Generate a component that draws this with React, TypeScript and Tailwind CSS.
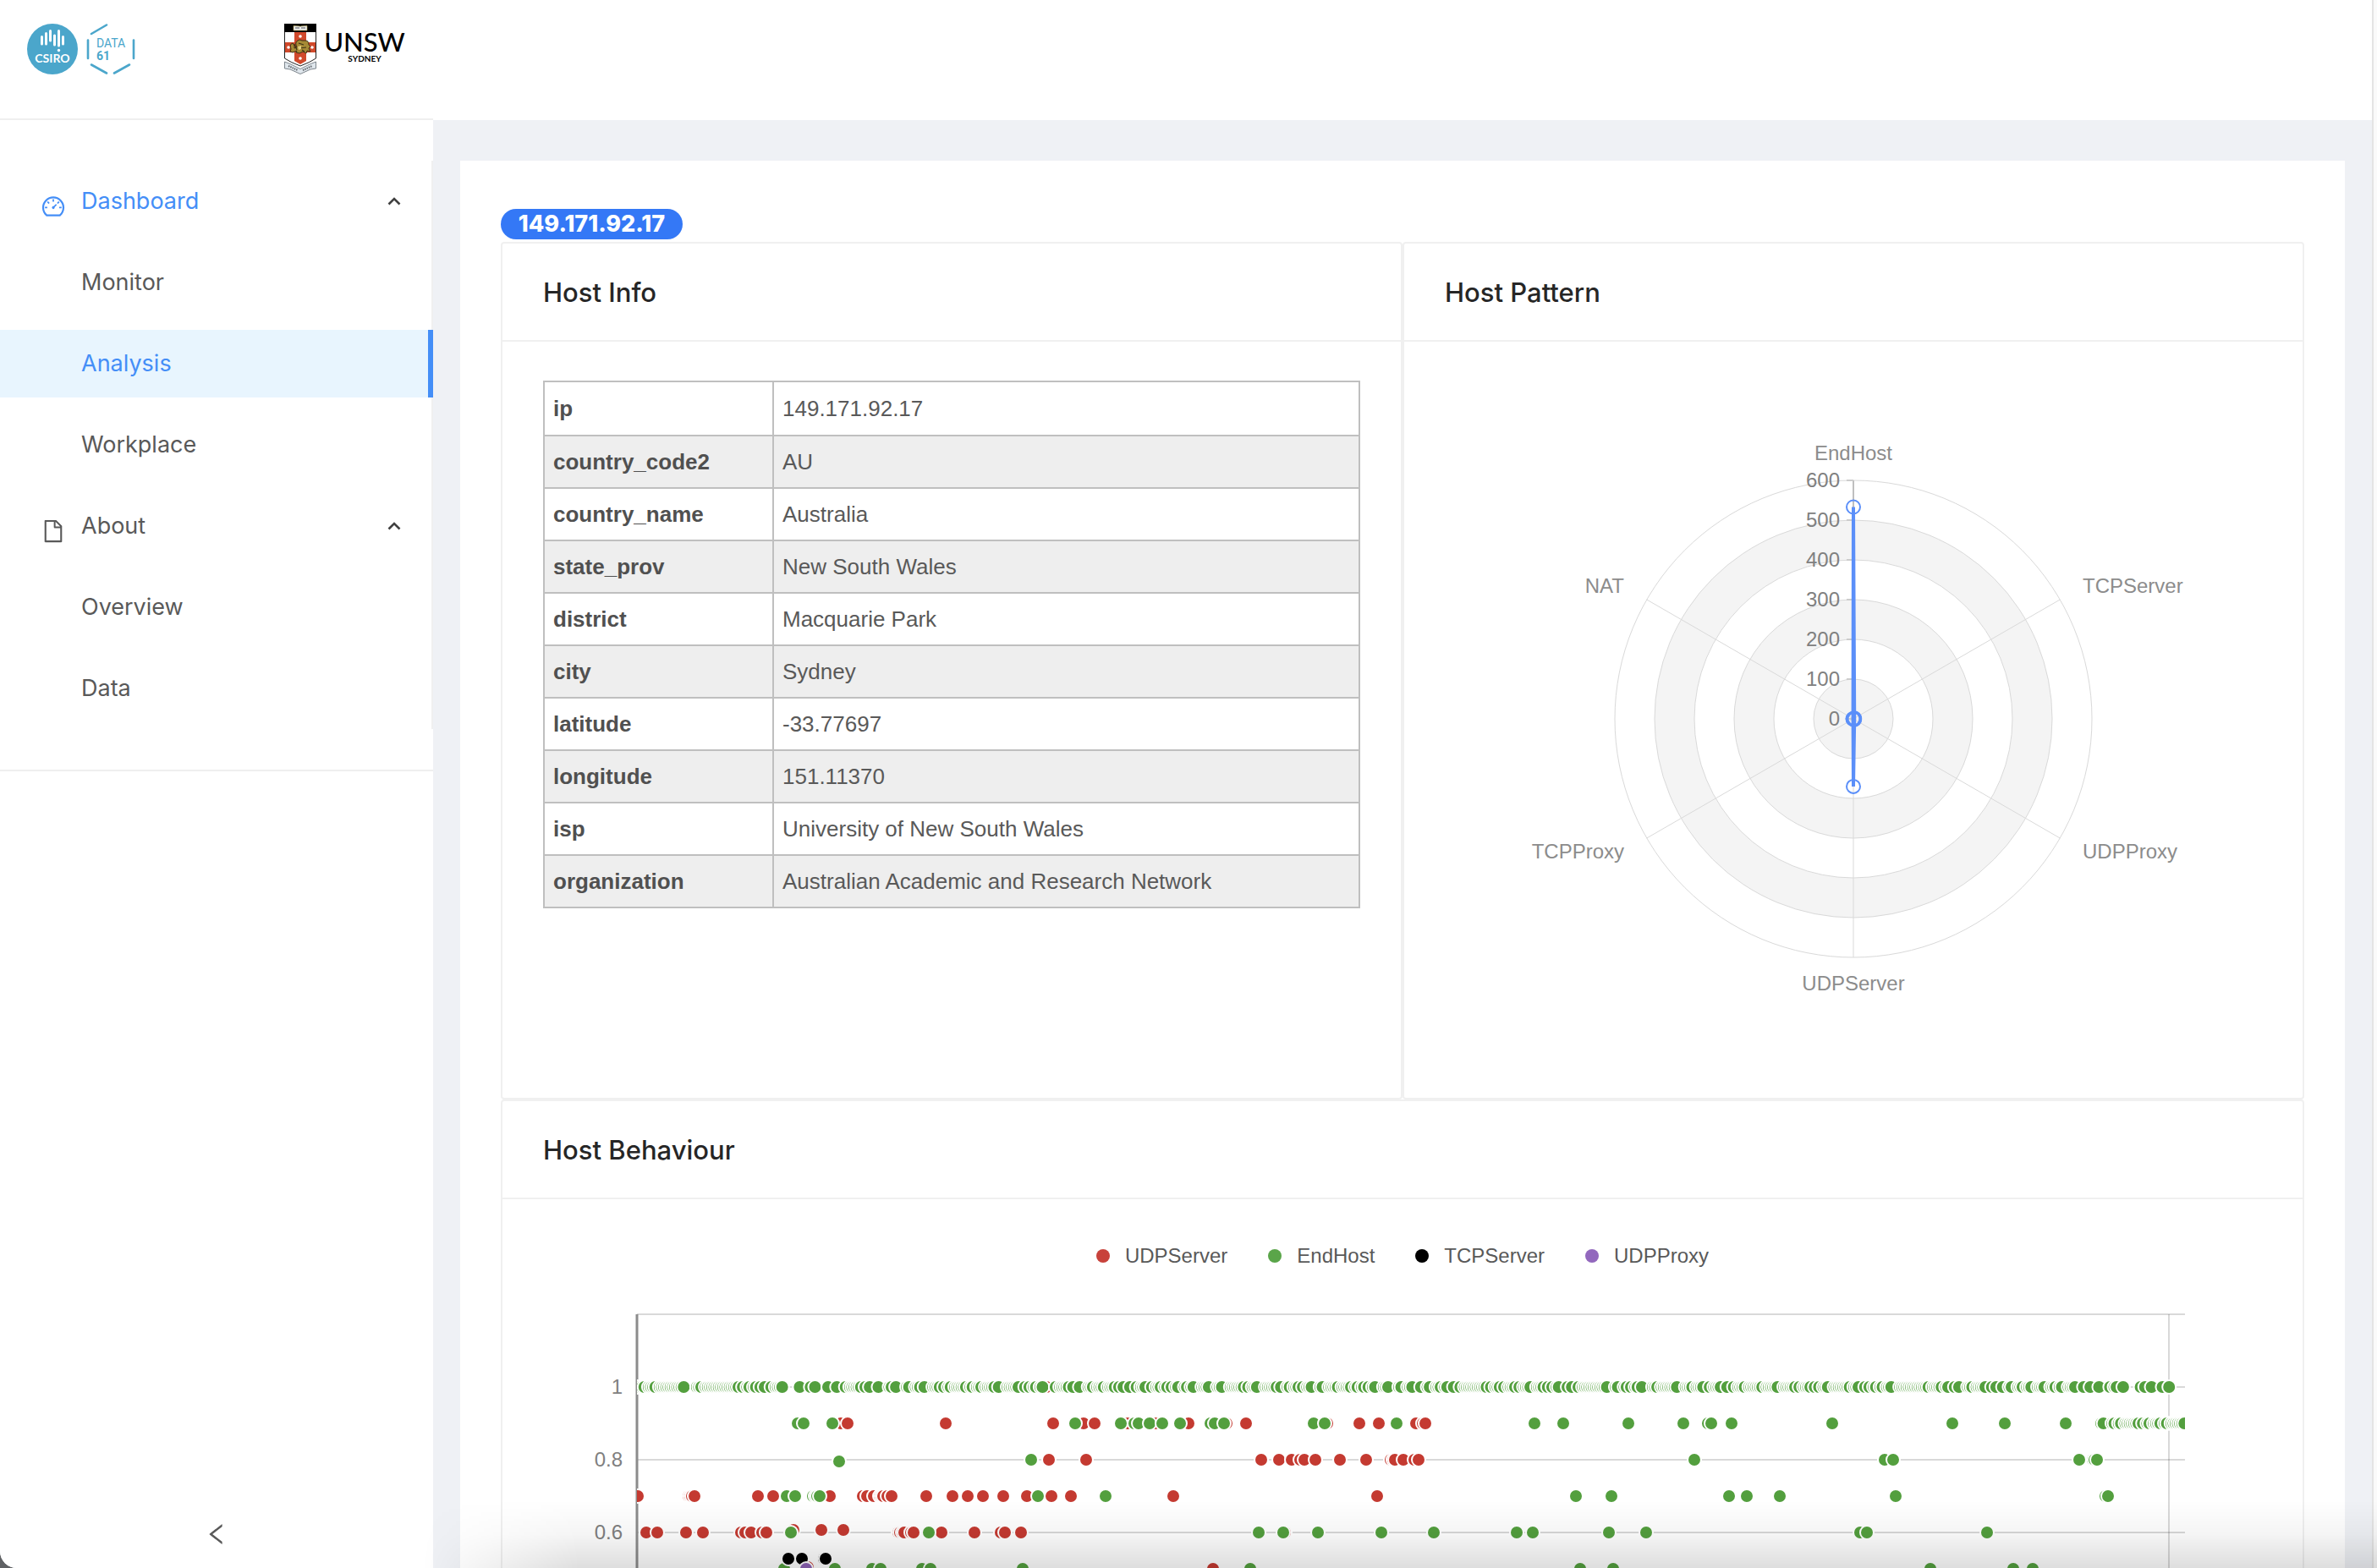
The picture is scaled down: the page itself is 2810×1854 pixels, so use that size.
import { AiOutlineDashboard, AiOutlineFile, AiOutlineLeft } from "react-icons/ai";
import type { ReactNode } from "react";

const RED = "#c43a31";
const GREEN = "#539f3e";
const BLACK = "#000000";
const PURPLE = "#8e63b5";

function CsiroLogo() {
  return (
    <svg viewBox="0 0 60 60" className="size-[60px]" role="img" aria-label="CSIRO">
      <circle cx="30" cy="30" r="30" fill="#4ba6cb" />
      <g stroke="#ffffff" strokeWidth="3" strokeLinecap="round">
        <path d="M17.5 15.500V24" />
        <path d="M22.500 11.500V24" />
        <path d="M27.500 8.500V20" />
        <path d="M32.500 14V25" />
        <path d="M37.500 8.500V26" />
        <path d="M42.500 15.500V24" />
      </g>
      <circle cx="37.500" cy="31.500" r="1.700" fill="#ffffff" />
      <text x="30" y="46" textAnchor="middle" fill="#ffffff" fontFamily="Lato, sans-serif" fontWeight="700" fontSize="14">
        CSIRO
      </text>
    </svg>
  );
}

function Data61Logo() {
  return (
    <svg viewBox="0 0 58 60" className="h-[60px] w-[58px]" role="img" aria-label="Data61">
      <g stroke="#4ba6cb" strokeWidth="2.600" strokeLinecap="round" fill="none">
        <path d="M6 12 24 1.500" />
        <path d="M2 19.500V41" />
        <path d="M56 19.500V41" />
        <path d="M6 48.500 24 58.500" />
        <path d="M33 58.500 51 48.500" />
      </g>
      <text x="12" y="28" fill="#4ba6cb" fontFamily="Roboto, sans-serif" fontWeight="400" fontSize="14">
        DATA
      </text>
      <text x="12" y="43" fill="#4ba6cb" fontFamily="Roboto, sans-serif" fontWeight="700" fontSize="14">
        61
      </text>
    </svg>
  );
}

function UnswLogo() {
  return (
    <svg viewBox="0 0 148 60" className="h-[60px] w-[148px]" role="img" aria-label="UNSW Sydney">
      <path d="M.5.5H37.500V41Q30 46 19 50 8 46 .5 41Z" fill="#ffffff" stroke="#222222" />
      <path d="M12 10H26V44L19 48 12 44Z" fill="#d1492b" />
      <path d="M1 22H37V34H1Z" fill="#d1492b" />
      <path d="M0 0H38V10H0Z" fill="#000000" />
      <path d="M11 2.500 18.500 3 19 3.500 19.500 3 27 2.500V8H11Z" fill="#e9ecef" stroke="#b9a24a" strokeWidth=".6" />
      <path d="M13 5H18M20 5H25" stroke="#555555" strokeWidth="1" />
      <g fill="#ffffff">
        <circle cx="19" cy="15" r="1.800" />
        <circle cx="5" cy="28" r="1.800" />
        <circle cx="33" cy="28" r="1.800" />
        <circle cx="19" cy="41" r="1.800" />
      </g>
      <path
        d="M8 30Q6 24 10 23 13 26 12 29L15 28Q12 22 16 20 18 18 21 20L25 20Q29 20 29 25L31 27 29 29 31 33 27 32 26 35 22 33 18 35 14 34 15 32 10 34 7 33Z"
        fill="#a58a35"
        stroke="#3d3317"
        strokeWidth="1"
      />
      <path d="M12 24 15 31M17 23 23 25M18 29 26 28M21 31 24 33" stroke="#3d3317" strokeWidth="1.200" fill="none" />
      <path d="M16 27 20 26 20 30 17 31Z" fill="#e3cf82" />
      <path d="M.5 45 8 48 19 53.500 30 48 37.500 45V53L31 54 19 59.500 7 54 .5 53Z" fill="#dfe6ec" stroke="#7e868d" />
      <path d="M5 50 16 55M22 55 33 50" stroke="#5d6368" strokeWidth="2" strokeDasharray="1.500 1" fill="none" />
      <text x="95" y="33" textAnchor="middle" fill="#000000" fontFamily="Lato, sans-serif" fontWeight="500" fontSize="31">
        UNSW
      </text>
      <text x="95" y="45" textAnchor="middle" fill="#000000" fontFamily="Lato, sans-serif" fontWeight="700" fontSize="10">
        SYDNEY
      </text>
    </svg>
  );
}

function ArrowUp() {
  return (
    <svg viewBox="0 0 16 10" className="h-[10px] w-4" aria-hidden="true">
      <path d="M1.500 8.500 8 2 14.500 8.500" fill="none" stroke="#404040" strokeWidth="2.600" />
    </svg>
  );
}

function MenuGroup({ icon, title, active, children }: { icon: ReactNode; title: string; active?: boolean; children: ReactNode }) {
  return (
    <li>
      <button
        type="button"
        aria-expanded="true"
        className={`mb-4 flex h-20 w-full items-center pr-9 pl-12 ${active ? "text-[#448ef7]" : "text-[#595959]"}`}
      >
        <span className="mr-5 w-7 pt-3">{icon}</span>
        <span className="flex-1 text-left">{title}</span>
        <ArrowUp />
      </button>
      <ul>{children}</ul>
    </li>
  );
}

function MenuItem({ label, selected }: { label: string; selected?: boolean }) {
  return (
    <li className="mb-4">
      <a
        href="#"
        className={`flex h-20 items-center pl-24 ${
          selected ? "-mr-0.5 border-r-[6px] border-[#448ef7] bg-[#e8f5fe] text-[#448ef7]" : "text-[#595959]"
        }`}
      >
        {label}
      </a>
    </li>
  );
}

function Sidebar() {
  return (
    <aside className="flex w-[512px] shrink-0 flex-col bg-white pt-12">
      <div className="border-b-2 border-[#efefef] pb-12">
        <ul className="h-[672px] border-r-2 border-[#f0f0f0] pt-2 text-[27px]">
          <MenuGroup icon={<AiOutlineDashboard size={30} />} title="Dashboard" active>
            <MenuItem label="Monitor" />
            <MenuItem label="Analysis" selected />
            <MenuItem label="Workplace" />
          </MenuGroup>
          <MenuGroup icon={<AiOutlineFile size={30} />} title="About">
            <MenuItem label="Overview" />
            <MenuItem label="Data" />
          </MenuGroup>
        </ul>
      </div>
      <button type="button" aria-label="Collapse menu" className="mt-auto mb-6 flex h-8 items-center justify-center text-[#595959]">
        <AiOutlineLeft size={32} />
      </button>
    </aside>
  );
}

function Card({ title, children }: { title: string; children: ReactNode }) {
  return (
    <section className="rounded-sm border-2 border-[#f0f0f0] bg-white">
      <h2 className="flex h-[116px] items-center border-b-2 border-[#f0f0f0] px-12 pt-0.5 text-[31px] font-medium text-[#262626]">
        {title}
      </h2>
      <div className="px-12 py-[46px]">{children}</div>
    </section>
  );
}

const hostInfo = [
  ["ip", "149.171.92.17"],
  ["country_code2", "AU"],
  ["country_name", "Australia"],
  ["state_prov", "New South Wales"],
  ["district", "Macquarie Park"],
  ["city", "Sydney"],
  ["latitude", "-33.77697"],
  ["longitude", "151.11370"],
  ["isp", "University of New South Wales"],
  ["organization", "Australian Academic and Research Network"],
];

function HostTable() {
  return (
    <table className="w-full border-2 border-[#bfbfbf] font-['Liberation_Sans',sans-serif] text-[26px] leading-9 text-[#595959]">
      <tbody>
        {hostInfo.map(([key, value]) => (
          <tr key={key} className="h-[62px] first:h-16 even:bg-[#eeeeee]">
            <th scope="row" className="w-[271px] border-2 border-[#bfbfbf] px-2.5 text-left font-bold text-[#505050]">
              {key}
            </th>
            <td className="border-2 border-[#bfbfbf] px-2.5">{value}</td>
          </tr>
        ))}
      </tbody>
    </table>
  );
}

const RING = 47;
const spokes = [0, 60, 120, 180, 240, 300];

function polar(angle: number, radius: number) {
  const rad = (angle * Math.PI) / 180;
  return { x: 483 + Math.sin(rad) * radius, y: 400 - Math.cos(rad) * radius };
}

function RadarChart() {
  const values = [533, 3, 3, 170, 1, 1].map((v, i) => polar(spokes[i], (v / 100) * RING));
  return (
    <svg viewBox="0 0 966 802" className="block w-full font-['Liberation_Sans',sans-serif] text-2xl" role="img" aria-label="Host pattern radar chart">
      {[6, 5, 4, 3, 2, 1].map((n) => (
        <circle key={n} cx="483" cy="400" r={n * RING} fill={n % 2 ? "#f4f4f4" : "#ffffff"} stroke="#d9d9d9" strokeWidth="1" />
      ))}
      {spokes.map((a) => {
        const p = polar(a, RING * 6);
        return <line key={a} x1="483" y1="400" x2={p.x} y2={p.y} stroke="#d9d9d9" strokeWidth="1" />;
      })}
      <path d="M483 400V118" stroke="#bfbfbf" strokeWidth="2" />
      {[0, 1, 2, 3, 4, 5, 6].map((n) => (
        <g key={n}>
          <path d={`M475 ${400 - n * RING}h8`} stroke="#cccccc" strokeWidth="2" />
          <text x="467" y={408 - n * RING} textAnchor="end" fill="#808080">
            {n * 100}
          </text>
        </g>
      ))}
      <g fill="#8c8c8c">
        <text x="483" y="94" textAnchor="middle">EndHost</text>
        <text x="754" y="251">TCPServer</text>
        <text x="754" y="565">UDPProxy</text>
        <text x="483" y="721" textAnchor="middle">UDPServer</text>
        <text x="212" y="565" textAnchor="end">TCPProxy</text>
        <text x="212" y="251" textAnchor="end">NAT</text>
      </g>
      <polygon points={values.map((p) => `${p.x},${p.y}`).join(" ")} fill="none" stroke="#5b8ff9" strokeWidth="4" strokeLinejoin="bevel" />
      {values.map((p, i) => (
        <circle key={i} cx={p.x} cy={p.y} r="8" fill="none" stroke="#5b8ff9" strokeWidth="2" />
      ))}
    </svg>
  );
}

/* Dense rows: [sample index, samples until the next one]; the stretches between entries have a point per sample. */
type Run = [number, number];

const fullRow: Run[] = [
  [0, 2], [3, 2], [8, 2], [21, 6], [29, 2], [46, 2], [48, 2], [51, 2], [54, 2], [56, 2], [58, 3], [61, 2], [66, 8], [74, 5],
  [79, 2], [81, 6], [87, 4], [91, 4], [95, 2], [102, 2], [104, 2], [106, 4], [110, 5], [116, 2], [118, 5], [124, 3], [129, 2],
  [131, 4], [138, 2], [140, 2], [143, 2], [150, 2], [153, 2], [157, 2], [163, 2], [165, 4], [174, 3], [177, 2], [179, 2],
  [182, 2], [185, 6], [191, 2], [197, 2], [199, 3], [202, 4], [208, 2], [213, 2], [218, 2], [220, 2], [222, 3], [225, 3],
  [228, 2], [232, 3], [235, 2], [239, 2], [242, 2], [244, 2], [247, 3], [251, 2], [254, 4], [261, 4], [267, 4], [277, 2],
  [279, 2], [283, 4], [292, 2], [294, 3], [298, 2], [302, 2], [304, 2], [308, 4], [313, 3], [320, 2], [326, 2], [329, 2],
  [332, 2], [334, 2], [337, 4], [343, 5], [349, 3], [354, 4], [358, 3], [362, 3], [367, 2], [370, 3], [373, 3], [376, 2],
  [388, 2], [390, 2], [394, 2], [396, 2], [401, 2], [403, 2], [408, 3], [414, 2], [416, 2], [418, 2], [421, 4], [425, 2],
  [427, 3], [430, 2], [443, 4], [448, 3], [452, 2], [454, 2], [457, 2], [459, 5], [466, 2], [475, 4], [482, 2], [487, 3],
  [490, 2], [495, 3], [498, 3], [501, 2], [506, 2], [514, 2], [521, 3], [529, 2], [531, 2], [536, 2], [538, 2], [540, 2],
  [544, 3], [554, 2], [558, 3], [561, 2], [563, 2], [566, 2], [569, 2], [573, 4], [590, 2], [596, 2], [599, 3], [602, 2],
  [604, 4], [610, 2], [616, 3], [619, 2], [621, 3], [624, 3], [628, 3], [633, 2], [637, 3], [643, 3], [648, 2], [651, 3],
  [657, 4], [661, 3], [664, 4], [668, 5], [673, 2], [676, 3], [679, 8], [687, 2], [689, 3], [692, 5], [697, 3], [700, 1],
];

const tailRow: Run[] = [[669, 1], [670, 4], [675, 2], [678, 2], [686, 2], [688, 2], [691, 2], [696, 2], [699, 2], [707, 1]];

function expand(runs: Run[]) {
  const out: number[] = [];
  runs.forEach(([at, gap], i) => {
    out.push(at);
    const next = i + 1 < runs.length ? runs[i + 1][0] : at;
    for (let k = at + gap; k < next; k += 1) out.push(k);
  });
  return out.map((k) => 112 + k * 2.586);
}

type Row = { y: number; xs: number[] };

const redRows: Row[] = [
  { y: 174, xs: [592, 595] },
  { y: 217, xs: [352, 360, 476, 603, 639, 652, 691, 724, 763, 808, 831, 927, 965, 988, 1032, 1040, 1043] },
  { y: 260, xs: [598, 642, 849, 870, 885, 895, 900, 913, 942, 973, 1002, 1005, 1007, 1017, 1030, 1035] },
  { y: 303, xs: [112, 172, 174, 176, 179, 254, 272, 339, 378, 383, 391, 398, 400, 402, 407, 412, 453, 484, 502, 520, 544, 572, 601, 624, 745, 986] },
  { y: 343, xs: [296, 329, 355] },
  { y: 346, xs: [122, 135, 169, 189, 234, 239, 246, 259, 264, 420, 422, 425, 427, 435, 438, 471, 510, 541, 546, 565, 877] },
  { y: 387, xs: [313] },
  { y: 389, xs: [792] },
];

const greenRows: Row[] = [
  { y: 174, xs: expand(fullRow) },
  {
    y: 217,
    xs: [301, 308, 342, 629, 683, 699, 704, 717, 732, 753, 789, 794, 805, 911, 924, 1009, 1172, 1206, 1283, 1348, 1377, 1381, 1405, 1524, 1666, 1728, 1800, ...expand(tailRow)],
  },
  { y: 262, xs: [350] },
  { y: 260, xs: [577, 1361, 1586, 1596, 1816, 1832, 1834, 1837] },
  { y: 303, xs: [288, 298, 319, 322, 324, 327, 585, 665, 1221, 1263, 1402, 1423, 1462, 1599, 1847, 1850] },
  { y: 346, xs: [293, 456, 846, 875, 916, 991, 1053, 1151, 1170, 1260, 1304, 1557, 1565, 1707] },
  { y: 389, xs: [285, 345, 389, 399, 448, 458, 567, 836, 1226, 1265, 1640, 1738, 1761] },
];

const blackRows: Row[] = [{ y: 377, xs: [290, 306, 332, 334] }];
const purpleRows: Row[] = [{ y: 389, xs: [311] }];

function Series({ rows, color }: { rows: Row[]; color: string }) {
  return (
    <g fill={color} stroke="#ffffff" strokeWidth="2">
      {rows.map((row) => row.xs.map((x, i) => <circle key={`${row.y}-${i}`} cx={x} cy={row.y} r="8" />))}
    </g>
  );
}

const legend = [
  { label: "UDPServer", dot: "bg-[#c8423b]" },
  { label: "EndHost", dot: "bg-[#5aa549]" },
  { label: "TCPServer", dot: "bg-black" },
  { label: "UDPProxy", dot: "bg-[#9268bd]" },
];

function BehaviourChart() {
  return (
    <div className="font-['Liberation_Sans',sans-serif] text-2xl">
      <ul className="flex h-[42px] items-center justify-center gap-12 text-[#595959]">
        {legend.map((item) => (
          <li key={item.label} className="flex items-center gap-[18px]">
            <span className={`size-4 rounded-full ${item.dot}`} />
            {item.label}
          </li>
        ))}
      </ul>
      <svg viewBox="0 40 2032 600" className="block w-full" role="img" aria-label="Host behaviour scatter chart">
        <defs>
          <clipPath id="plot-area">
            <rect x="111" y="88" width="1830" height="520" />
          </clipPath>
        </defs>
        {[88, 174, 260, 346, 432, 518].map((y) => (
          <path key={y} d={`M111 ${y}H1941`} stroke="#d9d9d9" strokeWidth="2" />
        ))}
        <path d="M1922 88V604" stroke="#000000" strokeOpacity=".15" strokeWidth="2" />
        <path d="M111 88V604" stroke="#8c8c8c" strokeWidth="3" />
        <g fill="#808080" textAnchor="end">
          <text x="94" y="182">1</text>
          <text x="94" y="268">0.8</text>
          <text x="94" y="354">0.6</text>
        </g>
        <g clipPath="url(#plot-area)">
          <Series rows={redRows} color={RED} />
          <Series rows={greenRows} color={GREEN} />
          <Series rows={blackRows} color={BLACK} />
          <Series rows={purpleRows} color={PURPLE} />
        </g>
      </svg>
    </div>
  );
}

export default function App() {
  return (
    <div className="relative flex h-screen overflow-hidden bg-[#5f6164] font-['Inter',sans-serif]">
      <div className="flex min-w-0 flex-1 flex-col overflow-hidden rounded-bl-[20px] bg-white">
        <header className="flex h-[142px] shrink-0 bg-white">
          <div className="flex w-[512px] items-start border-b-2 border-[#efefef] pt-7 pl-8">
            <CsiroLogo />
            <div className="ml-2.5">
              <Data61Logo />
            </div>
            <div className="ml-44">
              <UnswLogo />
            </div>
          </div>
        </header>
        <div className="flex min-h-0 flex-1">
          <Sidebar />
          <main className="min-w-0 flex-1 overflow-hidden bg-[#eff1f5] px-8 pt-12">
            <div className="bg-white px-12 pt-[57px] pb-12">
              <span className="mb-[3px] flex h-9 w-[215px] items-center justify-center rounded-full bg-[#3478f6] text-[27px] font-extrabold text-white">
                149.171.92.17
              </span>
              <div className="grid grid-cols-2">
                <Card title="Host Info">
                  <HostTable />
                </Card>
                <Card title="Host Pattern">
                  <RadarChart />
                </Card>
              </div>
              <Card title="Host Behaviour">
                <BehaviourChart />
              </Card>
            </div>
          </main>
        </div>
      </div>
      <div className="w-1.5 shrink-0 border-l-2 border-[#e4e4e4] bg-[#fafafa]" />
      <div className="pointer-events-none absolute right-0 bottom-0 left-[500px] h-20 bg-linear-to-b from-black/0 via-black/4 to-black/13 mask-l-from-92% mask-l-to-100%" />
    </div>
  );
}
